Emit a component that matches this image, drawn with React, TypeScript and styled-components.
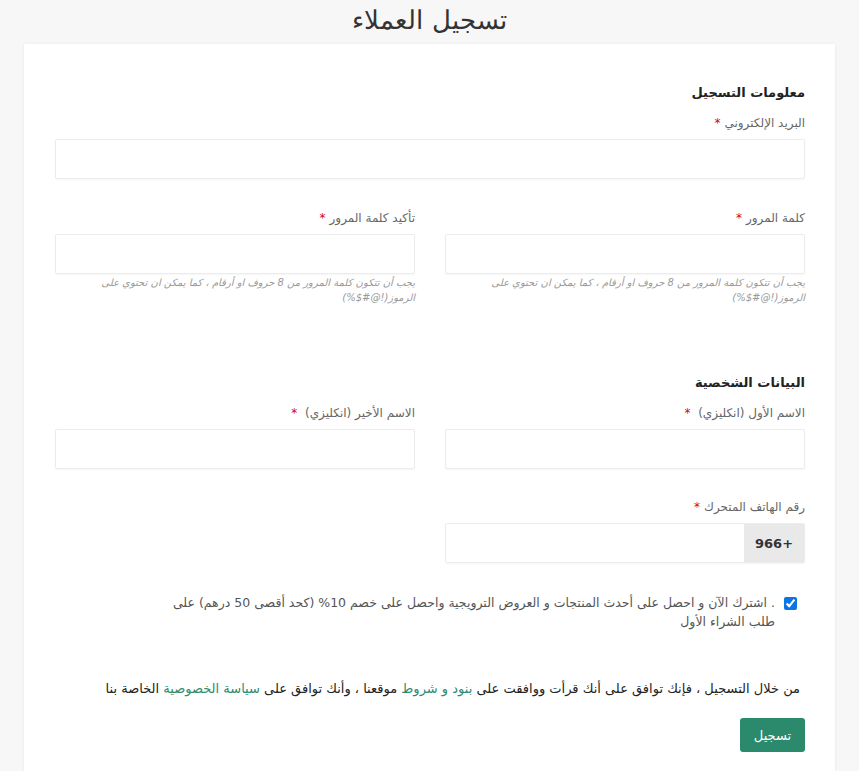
import React from 'react';
import styled, { createGlobalStyle } from 'styled-components';

const GlobalStyle = createGlobalStyle`
  html, body {
    margin: 0;
    padding: 0;
    background: #f7f7f7;
  }
  body {
    font-family: "DejaVu Sans", "Noto Sans", sans-serif;
    color: #333;
  }
  * { box-sizing: border-box; }
`;

const Page = styled.div`
  direction: rtl;
  min-height: 771px;
  display: flex;
  flex-direction: column;
`;

const PageTitle = styled.h1`
  margin: 0;
  height: 44px;
  line-height: 40px;
  text-align: center;
  font-size: 26px;
  font-weight: 200;
  color: #333;
`;

const Card = styled.div`
  flex: 1;
  margin: 0 24px;
  background: #fff;
  box-shadow: 0 0 3px rgba(0, 0, 0, 0.07);
  padding: 40px 30px 20px 31px;
`;

const Section = styled.section<{ $gapTop?: number }>`
  margin-top: ${(p) => p.$gapTop ?? 0}px;
  display: flex;
  flex-direction: column;
`;

const SectionTitle = styled.h3`
  margin: 0 0 13px;
  font-size: 13px;
  line-height: 18px;
  font-weight: bold;
  color: #222;
`;

const Row = styled.div<{ $gapTop?: number }>`
  margin-top: ${(p) => p.$gapTop ?? 0}px;
  display: grid;
  grid-template-columns: 1fr 1fr;
  column-gap: 30px;
`;

const Field = styled.div`
  display: flex;
  flex-direction: column;
`;

const Label = styled.label`
  font-size: 12px;
  line-height: 16px;
  color: #666;
  margin-bottom: 8px;
`;

const Star = styled.span`
  color: #d0021b;
  margin-right: 4px;
`;

const Input = styled.input`
  height: 40px;
  width: 100%;
  border: 1px solid #ececec;
  border-radius: 2px;
  box-shadow: 0 1px 2px rgba(0, 0, 0, 0.04);
  background: #fff;
  padding: 0 12px;
  font-size: 13px;
  outline: none;
`;

const Hint = styled.div`
  margin-top: 1px;
  font-size: 10px;
  line-height: 15px;
  font-style: italic;
  color: #999;
`;

const PhoneGroup = styled.div`
  display: flex;
  height: 40px;
  border: 1px solid #ececec;
  border-radius: 2px;
  box-shadow: 0 1px 2px rgba(0, 0, 0, 0.04);
  overflow: hidden;
`;

const Prefix = styled.div`
  width: 60px;
  background: #e9e9e9;
  display: flex;
  align-items: center;
  justify-content: center;
  font-size: 13px;
  font-weight: bold;
  color: #333;
`;

const PhoneInput = styled.input`
  flex: 1;
  border: none;
  outline: none;
  padding: 0 12px;
  font-size: 13px;
`;

const CheckRow = styled.label`
  margin-top: 30px;
  display: flex;
  align-items: flex-start;
  gap: 9px;
  padding-right: 8px;
`;

const Check = styled.input`
  margin: 4px 0 0;
  width: 13px;
  height: 13px;
  flex: none;
  accent-color: #0b75e6;
`;

const CheckText = styled.span`
  max-width: 606px;
  font-size: 12.5px;
  line-height: 19px;
  color: #555;
`;

const Terms = styled.p`
  margin: 49px 0 0;
  padding-right: 5px;
  font-size: 13px;
  line-height: 18px;
  color: #222;
`;

const TermsLink = styled.a`
  color: #2e8b6d;
  text-decoration: none;
`;

const Actions = styled.div`
  margin-top: 20px;
  display: flex;
`;

const SubmitButton = styled.button`
  height: 34px;
  width: 65px;
  border: none;
  border-radius: 3px;
  background: #2a8a6b;
  color: #fff;
  font-family: inherit;
  font-size: 13px;
  cursor: pointer;
`;

const hintText = 'يجب أن تتكون كلمة المرور من 8 حروف او أرقام ، كما يمكن ان تحتوي على الرموز(!@#$%)';

export default function App() {
  return (
    <>
      <GlobalStyle />
      <Page>
        <PageTitle>تسجيل العملاء</PageTitle>
        <Card>
          <Section>
            <SectionTitle>معلومات التسجيل</SectionTitle>
            <Field>
              <Label>
                البريد الإلكتروني<Star>*</Star>
              </Label>
              <Input type="email" />
            </Field>
            <Row $gapTop={31}>
              <Field>
                <Label>
                  كلمة المرور<Star>*</Star>
                </Label>
                <Input type="password" />
                <Hint>{hintText}</Hint>
              </Field>
              <Field>
                <Label>
                  تأكيد كلمة المرور<Star>*</Star>
                </Label>
                <Input type="password" />
                <Hint>{hintText}</Hint>
              </Field>
            </Row>
          </Section>

          <Section $gapTop={69}>
            <SectionTitle>البيانات الشخصية</SectionTitle>
            <Row>
              <Field>
                <Label>
                  الاسم الأول (انكليزي) <Star>*</Star>
                </Label>
                <Input type="text" />
              </Field>
              <Field>
                <Label>
                  الاسم الأخير (انكليزي) <Star>*</Star>
                </Label>
                <Input type="text" />
              </Field>
            </Row>
            <Row $gapTop={30}>
              <Field>
                <Label>
                  رقم الهاتف المتحرك<Star>*</Star>
                </Label>
                <PhoneGroup>
                  <Prefix>+966</Prefix>
                  <PhoneInput type="tel" />
                </PhoneGroup>
              </Field>
            </Row>
          </Section>

          <CheckRow>
            <Check type="checkbox" defaultChecked />
            <CheckText>
              . اشترك الآن و احصل على أحدث المنتجات و العروض الترويجية واحصل على خصم 10% (كحد أقصى 50 درهم) على طلب الشراء الأول
            </CheckText>
          </CheckRow>

          <Terms>
            من خلال التسجيل ، فإنك توافق على أنك قرأت ووافقت على <TermsLink href="#">بنود و شروط</TermsLink> موقعنا ، وأنك توافق على{' '}
            <TermsLink href="#">سياسة الخصوصية</TermsLink> الخاصة بنا
          </Terms>

          <Actions>
            <SubmitButton type="submit">تسجيل</SubmitButton>
          </Actions>
        </Card>
      </Page>
    </>
  );
}
